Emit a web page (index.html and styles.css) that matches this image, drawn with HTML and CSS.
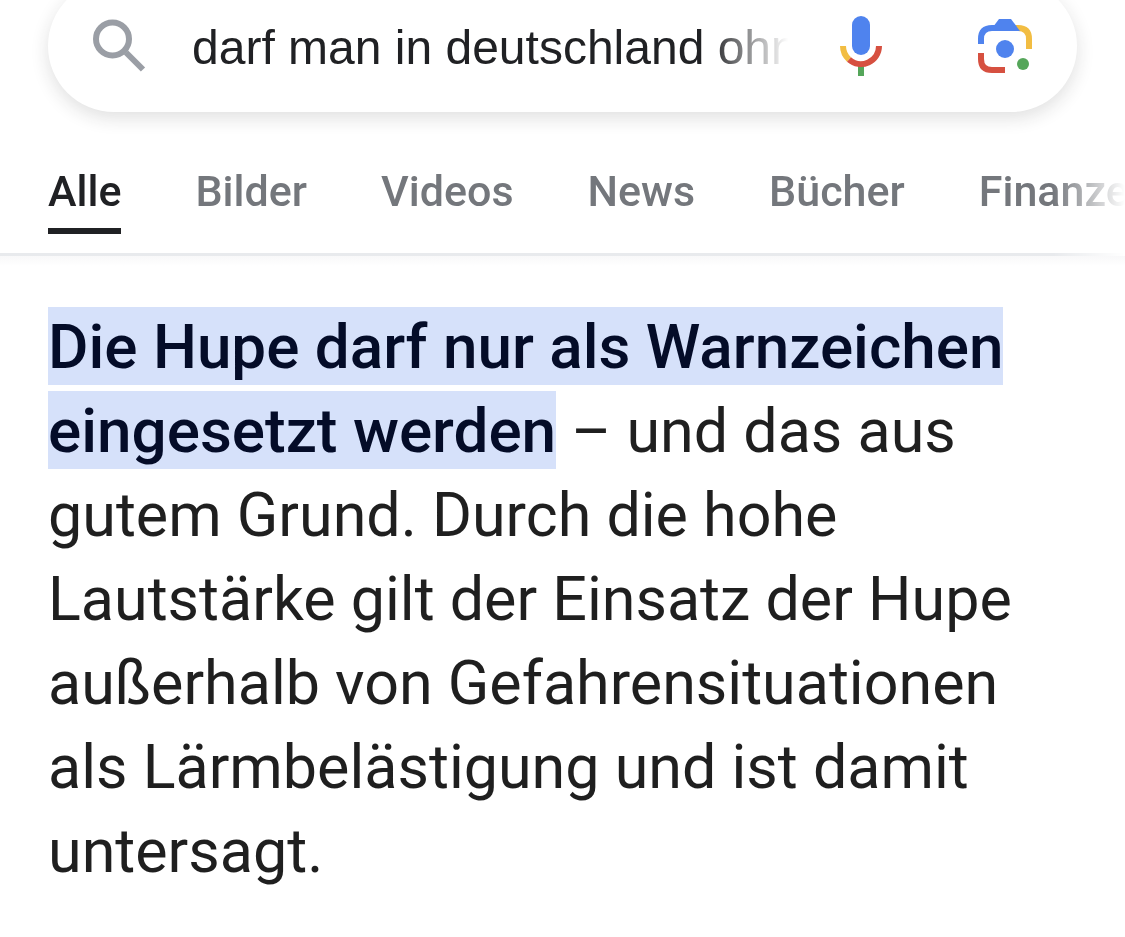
FILE: index.html
```html
<!DOCTYPE html>
<html lang="de">
<head>
    <meta charset="UTF-8">
    <meta name="viewport" content="width=device-width, initial-scale=1.0">
    <title>darf man in deutschland ohne</title>
    <link rel="stylesheet" href="styles.css">
</head>
<body>
    <header>
        <form class="search-bar" role="search">
            <button type="submit" class="icon-button search-button" aria-label="Suche">
                <svg width="54" height="54" viewBox="0 0 54 54" fill="none" stroke="#9a9ea5" stroke-width="6">
                    <circle cx="19.5" cy="20" r="16.5"/>
                    <path d="M33 33.5L50 50.5"/>
                </svg>
            </button>
            <input type="text" class="search-input" aria-label="Suche" value="darf man in deutschland ohne">
            <button type="button" class="icon-button" aria-label="Sprachsuche">
                <svg width="42" height="60" viewBox="0 0 42 60">
                    <rect x="12" y="0" width="18" height="39" rx="9" fill="#4f83ee"/>
                    <path d="M18 49h6v11h-6z" fill="#55a65a"/>
                    <path d="M3 30A18 18 0 0 0 9 43.4" fill="none" stroke="#f2bd42" stroke-width="6"/>
                    <path d="M9 43.4A18 18 0 0 0 39 30" fill="none" stroke="#d65040" stroke-width="6"/>
                </svg>
            </button>
            <button type="button" class="icon-button lens-button" aria-label="Bildersuche">
                <svg width="54" height="54" viewBox="0 0 54 54">
                    <path d="M37 9H40Q51 9 51 20V30" fill="none" stroke="#f2bd42" stroke-width="6"/>
                    <path d="M3 25V20Q3 9 14 9H36" fill="none" stroke="#4f83ee" stroke-width="6"/>
                    <path d="M15 8L21 0H33L42 12H15z" fill="#4f83ee"/>
                    <path d="M3 34V40Q3 51 14 51H27" fill="none" stroke="#d65040" stroke-width="6"/>
                    <circle cx="27" cy="30" r="9" fill="#4f83ee"/>
                    <circle cx="45" cy="45" r="6" fill="#55a65a"/>
                </svg>
            </button>
        </form>
        <nav class="tabs">
            <a href="#" class="tab active" aria-current="page">Alle</a>
            <a href="#" class="tab">Bilder</a>
            <a href="#" class="tab">Videos</a>
            <a href="#" class="tab">News</a>
            <a href="#" class="tab">Bücher</a>
            <a href="#" class="tab">Finanzen</a>
        </nav>
    </header>
    <main>
        <p class="answer"><mark>Die Hupe darf nur als Warnzeichen eingesetzt werden</mark> – und das aus gutem Grund. Durch die hohe Lautstärke gilt der Einsatz der Hupe außerhalb von Gefahrensituationen als Lärmbelästigung und ist damit untersagt.</p>
    </main>
</body>
</html>
```
FILE: styles.css
```css
* {
    box-sizing: border-box;
}

body {
    margin: 0;
    background-color: #fff;
    color: #1f1f1f;
    font-family: Roboto, "Liberation Sans", sans-serif;
    overflow-x: hidden;
}

header {
    display: flow-root;
}

.search-bar {
    display: flex;
    align-items: center;
    height: 132px;
    margin: -20px 48px 0;
    padding: 0 45px;
    border-radius: 66px;
    background-color: #fff;
    box-shadow: 0 6px 18px rgba(32, 33, 36, 0.14);
}

.icon-button {
    display: flex;
    padding: 0;
    border: none;
    background: none;
    cursor: pointer;
}

.search-button {
    margin-right: 45px;
}

.lens-button {
    margin-left: 96px;
}

.search-input {
    flex: 1;
    min-width: 0;
    margin-right: 52px;
    padding: 2px 0 0;
    border: none;
    outline: none;
    background: none;
    color: #202124;
    font-family: "Liberation Sans", Arial, sans-serif;
    font-size: 48px;
    -webkit-mask-image: linear-gradient(to left, transparent, #000 80px);
    mask-image: linear-gradient(to left, transparent, #000 80px);
}

.tabs {
    display: flex;
    gap: 74px;
    height: 144px;
    padding: 48px 48px 0;
    overflow: hidden;
    border-bottom: 3px solid #e8eaed;
    -webkit-mask-image: linear-gradient(to left, transparent, #000 72px);
    mask-image: linear-gradient(to left, transparent, #000 72px);
}

.tab {
    flex: none;
    height: 74px;
    color: #74777c;
    font-size: 43px;
    font-weight: 500;
    line-height: 62px;
    text-decoration: none;
}

.tab.active {
    color: #202124;
    border-bottom: 6px solid #202124;
}

main {
    padding: 49px 72px 48px 48px;
    background: linear-gradient(#f8f8f9, #fff 10px);
}

.answer {
    margin: 0;
    font-size: 61px;
    line-height: 84px;
}

mark {
    padding: 3px 0 2px;
    background-color: #d6e1fa;
    color: #040c28;
    font-size: 62px;
    font-weight: 500;
}
```
